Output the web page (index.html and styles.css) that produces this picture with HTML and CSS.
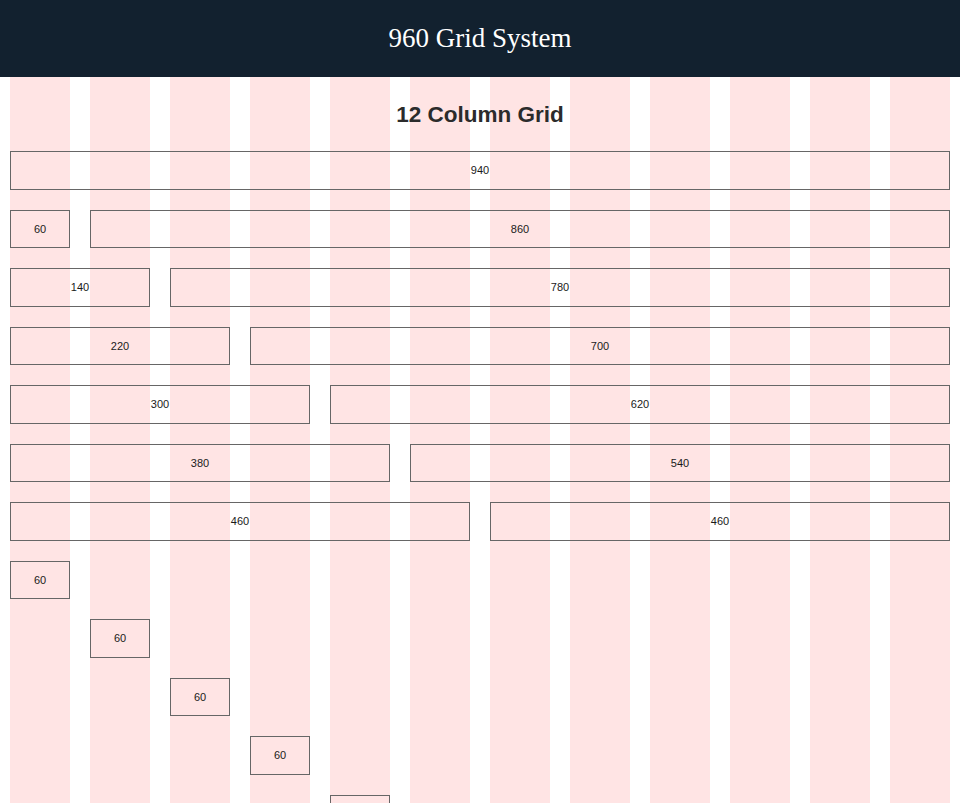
FILE: index.html
```html
<!DOCTYPE html>
<html lang="en">
<head>
<meta charset="utf-8">
<title>960 Grid System</title>
<link rel="stylesheet" href="styles.css">
</head>
<body>
<header class="site-header">
  <h1 class="site-title">960 Grid System</h1>
</header>
<main class="container">
  <h2 class="grid-title">12 Column Grid</h2>
  <div class="grid">
    <div class="row"><p class="cell span-12">940</p></div>
    <div class="row"><p class="cell span-1">60</p><p class="cell span-11">860</p></div>
    <div class="row"><p class="cell span-2">140</p><p class="cell span-10">780</p></div>
    <div class="row"><p class="cell span-3">220</p><p class="cell span-9">700</p></div>
    <div class="row"><p class="cell span-4">300</p><p class="cell span-8">620</p></div>
    <div class="row"><p class="cell span-5">380</p><p class="cell span-7">540</p></div>
    <div class="row"><p class="cell span-6">460</p><p class="cell span-6">460</p></div>
    <div class="row"><p class="cell span-1 start-1">60</p></div>
    <div class="row"><p class="cell span-1 start-2">60</p></div>
    <div class="row"><p class="cell span-1 start-3">60</p></div>
    <div class="row"><p class="cell span-1 start-4">60</p></div>
    <div class="row"><p class="cell span-1 start-5">60</p></div>
    <div class="row"><p class="cell span-1 start-6">60</p></div>
    <div class="row"><p class="cell span-1 start-7">60</p></div>
    <div class="row"><p class="cell span-1 start-8">60</p></div>
    <div class="row"><p class="cell span-1 start-9">60</p></div>
    <div class="row"><p class="cell span-1 start-10">60</p></div>
    <div class="row"><p class="cell span-1 start-11">60</p></div>
    <div class="row"><p class="cell span-1 start-12">60</p></div>
  </div>
</main>
</body>
</html>
```
FILE: styles.css
```css
html, body {
  margin: 0;
  padding: 0;
  background: #fff;
}

body {
  font-family: "Liberation Sans", Arial, sans-serif;
  color: #333;
}

.site-header {
  background: #12212f;
  height: 77px;
  display: flex;
  align-items: center;
  justify-content: center;
}

.site-title {
  margin: 0;
  font-family: "Liberation Serif", "Times New Roman", serif;
  font-weight: normal;
  font-size: 27px;
  color: #fff;
  line-height: 1;
  padding-bottom: 1px;
}

.container {
  width: 960px;
  margin: 0 auto;
  padding-bottom: 40px;
  background: repeating-linear-gradient(
    to right,
    #fff 0px,
    #fff 10px,
    #ffe4e4 10px,
    #ffe4e4 70px,
    #fff 70px,
    #fff 80px
  );
}

.grid-title {
  margin: 0;
  padding: 20px 0 18px;
  text-align: center;
  font-size: 22.5px;
  line-height: 36px;
  font-weight: bold;
  color: #2b2b2b;
}

.grid {
  display: flex;
  flex-direction: column;
  gap: 20px;
  padding: 0 10px;
}

.row {
  display: grid;
  grid-template-columns: repeat(12, 60px);
  column-gap: 20px;
}

.cell {
  margin: 0;
  border: 1px solid #666;
  padding: 10px 0;
  text-align: center;
  font-size: 11px;
  line-height: 16.5px;
  color: #1a1a1a;
}

.span-1 { grid-column-end: span 1; }
.span-2 { grid-column-end: span 2; }
.span-3 { grid-column-end: span 3; }
.span-4 { grid-column-end: span 4; }
.span-5 { grid-column-end: span 5; }
.span-6 { grid-column-end: span 6; }
.span-7 { grid-column-end: span 7; }
.span-8 { grid-column-end: span 8; }
.span-9 { grid-column-end: span 9; }
.span-10 { grid-column-end: span 10; }
.span-11 { grid-column-end: span 11; }
.span-12 { grid-column-end: span 12; }

.start-1 { grid-column-start: 1; }
.start-2 { grid-column-start: 2; }
.start-3 { grid-column-start: 3; }
.start-4 { grid-column-start: 4; }
.start-5 { grid-column-start: 5; }
.start-6 { grid-column-start: 6; }
.start-7 { grid-column-start: 7; }
.start-8 { grid-column-start: 8; }
.start-9 { grid-column-start: 9; }
.start-10 { grid-column-start: 10; }
.start-11 { grid-column-start: 11; }
.start-12 { grid-column-start: 12; }
```
